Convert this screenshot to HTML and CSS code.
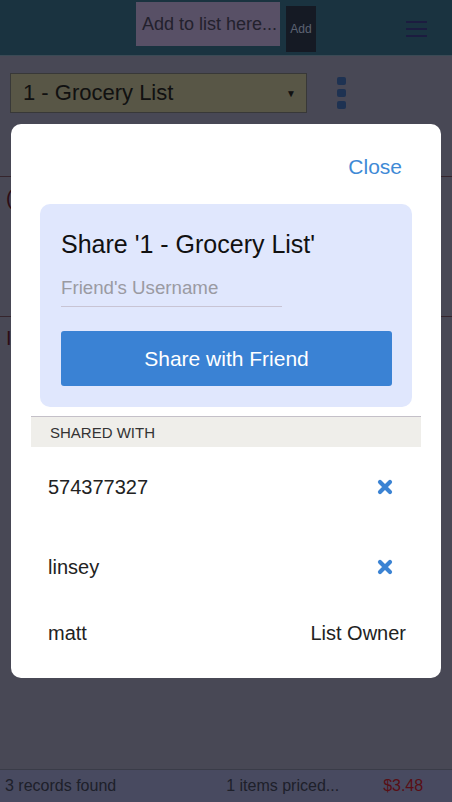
FILE: index.html
```html
<!DOCTYPE html>
<html>
<head>
<meta charset="utf-8">
<title>Grocery List</title>
<link rel="stylesheet" href="styles.css">
</head>
<body>
<div class="app">
  <header class="topbar">
    <div class="add-form">
      <div class="add-input">Add to list here...</div>
      <div class="add-btn">Add</div>
    </div>
    <div class="hamburger"><span></span><span></span><span></span></div>
  </header>
  <div class="list-select-row">
    <div class="list-select">
      <span>1 - Grocery List</span>
      <span class="caret">▼</span>
    </div>
    <div class="kebab"><span></span><span></span><span></span></div>
  </div>
  <main class="items">
    <div class="item">(</div>
    <div class="item">I</div>
  </main>
  <footer class="status">
    <span class="records">3 records found</span>
    <span class="priced">1 items priced...</span>
    <span class="price">$3.48</span>
  </footer>
</div>

<div class="overlay">
  <div class="modal">
    <div class="modal-top"><span class="close">Close</span></div>
    <div class="share-panel">
      <div class="share-title">Share '1 - Grocery List'</div>
      <div class="username">Friend's Username</div>
      <div class="share-btn">Share with Friend</div>
    </div>
    <div class="shared-head">SHARED WITH</div>
    <div class="shared-row tall">
      <span>574377327</span>
      <svg class="remove" width="16" height="16" viewBox="0 0 16 16"><path d="M3 3 L13 13 M13 3 L3 13" stroke="#3b83d3" stroke-width="4.2" stroke-linecap="round" fill="none"/></svg>
    </div>
    <div class="shared-row tall">
      <span>linsey</span>
      <svg class="remove" width="16" height="16" viewBox="0 0 16 16"><path d="M3 3 L13 13 M13 3 L3 13" stroke="#3b83d3" stroke-width="4.2" stroke-linecap="round" fill="none"/></svg>
    </div>
    <div class="shared-row">
      <span>matt</span>
      <span class="owner">List Owner</span>
    </div>
  </div>
</div>
</body>
</html>
```

FILE: styles.css
```css
* { box-sizing: border-box; }
html, body { margin: 0; padding: 0; }
body {
  font-family: "Liberation Sans", Arial, sans-serif;
  background: #9090aa;
  color: #222;
}
.app {
  height: 802px;
  display: flex;
  flex-direction: column;
}
.topbar {
  height: 56px;
  background: #346680;
  border-bottom: 1px solid #7494aa;
  display: flex;
  align-items: flex-start;
  position: relative;
}
.add-form {
  display: flex;
  align-items: flex-start;
  margin-left: 136px;
  margin-top: 2px;
  gap: 6px;
}
.add-input {
  width: 144px;
  height: 44px;
  background: #b0a0cc;
  color: #46425a;
  font-size: 18px;
  padding: 12px 0 0 6px;
  white-space: nowrap;
  overflow: hidden;
  text-overflow: ellipsis;
}
.add-btn {
  width: 30px;
  height: 46px;
  margin-top: 4px;
  background: #2a3448;
  color: #b8c4e0;
  font-size: 12px;
  text-align: center;
  line-height: 46px;
}
.hamburger {
  margin-left: auto;
  margin-right: 25px;
  margin-top: 21px;
  display: flex;
  flex-direction: column;
  gap: 5px;
}
.hamburger span {
  display: block;
  width: 21px;
  height: 2px;
  background: #383880;
}
.list-select-row {
  display: flex;
  align-items: flex-start;
  padding: 17px 0 0 10px;
}
.list-select {
  width: 297px;
  height: 40px;
  background: #b0ac8c;
  border: 1px solid #707070;
  display: flex;
  align-items: center;
  justify-content: space-between;
  padding: 0 10px 0 12px;
  font-size: 22px;
  color: #222;
}
.caret { font-size: 10px; }
.kebab {
  margin-left: 30px;
  margin-top: 4px;
  display: flex;
  flex-direction: column;
  gap: 4px;
}
.kebab span {
  display: block;
  width: 9px;
  height: 8px;
  border-radius: 2px;
  background: #3c64a4;
}
.items {
  flex: 1;
  padding-top: 63px;
}
.item {
  height: 140px;
  border-top: 1px solid #6a4a5a;
  padding: 10px 0 0 6px;
  color: #5a1a2a;
  font-size: 20px;
}
.status {
  height: 33px;
  background: #9094c0;
  border-top: 1px solid #747890;
  display: flex;
  align-items: center;
  font-size: 16px;
  color: #3c4054;
  padding: 0 0 0 5px;
}
.priced { margin-left: 110px; }
.price { margin-left: 44px; color: #b01c2c; }

.overlay {
  position: fixed;
  inset: 0;
  background: rgba(0, 0, 0, 0.5);
  padding: 124px 11px 0 11px;
}
.modal {
  background: #fff;
  border-radius: 10px;
  height: 554px;
  padding: 20px 20px;
}
.modal-top {
  display: flex;
  justify-content: flex-end;
  padding: 11px 19px 0 0;
  height: 60px;
}
.close {
  color: #3f8ad6;
  font-size: 21px;
  line-height: 24px;
}
.share-panel {
  margin: 0 9px;
  background: #e0e7fd;
  border-radius: 10px;
  padding: 26px 20px 21px 21px;
}
.share-title {
  font-size: 25px;
  line-height: 28px;
  color: #111;
}
.username {
  width: 221px;
  height: 35px;
  margin-top: 14px;
  border-bottom: 1px solid #c8c4d4;
  font-size: 18.7px;
  color: #9a9aa2;
  padding-top: 5px;
}
.share-btn {
  margin-top: 24px;
  height: 55px;
  background: #3a82d4;
  border-radius: 3px;
  color: #fff;
  font-size: 21px;
  display: flex;
  align-items: center;
  justify-content: center;
}
.shared-head {
  margin-top: 9px;
  height: 31px;
  background: #efeeea;
  border-top: 1px solid #c4c0c8;
  font-size: 15px;
  color: #333;
  padding: 7px 0 0 19px;
}
.shared-row {
  display: flex;
  align-items: center;
  justify-content: space-between;
  height: 52px;
  padding: 0 15px 0 17px;
  font-size: 20px;
  color: #222;
}
.shared-row.tall { height: 80px; }
.remove { margin-right: 13px; }
.owner { color: #222; }
```
